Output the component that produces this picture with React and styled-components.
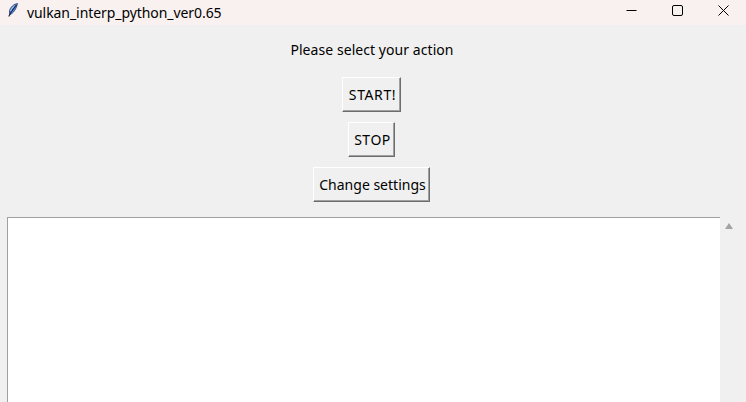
import styled, { createGlobalStyle } from "styled-components";

const GlobalStyle = createGlobalStyle`
  html, body {
    margin: 0;
    padding: 0;
    height: 100%;
    overflow: hidden;
    background: #f0f0f0;
  }
`;

const Window = styled.div`
  width: 746px;
  height: 402px;
  display: flex;
  flex-direction: column;
  overflow: hidden;
  background: #f0f0f0;
  font-family: "Noto Sans", "Open Sans", sans-serif;
  color: #000;
`;

const TitleBar = styled.div`
  height: 25px;
  flex: none;
  display: flex;
  align-items: flex-start;
  background: #f8f1f0;
`;

const AppIcon = styled.svg`
  width: 12px;
  height: 18px;
  margin: 3px 0 0 7px;
  flex: none;
`;

const Title = styled.div`
  margin-left: 8px;
  font-size: 14px;
  line-height: 25px;
  letter-spacing: -0.07px;
  flex: 1;
`;

const WindowButton = styled.div`
  width: 46px;
  height: 21px;
  display: flex;
  align-items: center;
  justify-content: center;

  svg {
    display: block;
  }
`;

const Content = styled.div`
  flex: 1;
  min-height: 0;
  padding-right: 3px;
  display: flex;
  flex-direction: column;
  align-items: center;
`;

const Prompt = styled.div`
  margin-top: 15px;
  padding-left: 1px;
  height: 20px;
  font-size: 14px;
  line-height: 20px;
  letter-spacing: 0.06px;
`;

const Actions = styled.div`
  margin-top: 17px;
  display: flex;
  flex-direction: column;
  align-items: center;
  gap: 10px;
`;

const ActionButton = styled.button`
  width: ${(p) => p.$width}px;
  height: 35px;
  padding: 0 0 0 2px;
  box-sizing: border-box;
  font-family: inherit;
  font-size: 14px;
  letter-spacing: ${(p) => p.$tracking || 0}px;
  color: #000;
  background: #f0f0f0;
  border: 1px solid;
  border-color: #fff #6d6d6d #6d6d6d #fff;
  box-shadow: inset -1px -1px 0 #a0a0a0;
  border-radius: 0;
`;

const LogRow = styled.div`
  align-self: stretch;
  margin-top: 15px;
  padding-left: 7px;
  flex: 1;
  min-height: 0;
  display: flex;
`;

const LogBox = styled.div`
  width: 713px;
  box-sizing: border-box;
  background: #fff;
  border-top: 1px solid #a0a0a0;
  border-left: 1px solid #a0a0a0;
`;

const ScrollBar = styled.div`
  width: 18px;
  display: flex;
  justify-content: center;
  padding-top: 6px;

  svg {
    display: block;
  }
`;

const App = () => {
  return (
    <Window>
      <GlobalStyle />
      <TitleBar>
        <AppIcon viewBox="0 0 12 18">
          <path
            d="M10.500.500C7 1 3.200 4 2.500 8c-.2 1.500 0 2.500.5 3.500C6 10.500 9.500 6 10.500.500z"
            fill="#5c8fd8"
            stroke="#1b2f5e"
            strokeWidth=".7"
          />
          <path d="M9.500 2C7.500 4.500 4 8.500 1.800 13.500" stroke="#10244f" strokeWidth="1.100" fill="none" />
          <path d="M7.500 2.800C5.800 4.200 4.300 6 3.700 8" stroke="#c4d6f2" strokeWidth=".9" fill="none" />
        </AppIcon>
        <Title>vulkan_interp_python_ver0.65</Title>
        <WindowButton>
          <svg width="11" height="11" viewBox="0 0 11 11">
            <path d="M.5 5.500h10" stroke="#000" strokeWidth="1" />
          </svg>
        </WindowButton>
        <WindowButton>
          <svg width="11" height="11" viewBox="0 0 11 11">
            <rect x=".5" y=".5" width="10" height="10" rx="1.500" stroke="#000" strokeWidth="1" fill="none" />
          </svg>
        </WindowButton>
        <WindowButton>
          <svg width="11" height="11" viewBox="0 0 11 11">
            <path d="M.5.500l10 10M10.500.500l-10 10" stroke="#000" strokeWidth="1" />
          </svg>
        </WindowButton>
      </TitleBar>
      <Content>
        <Prompt>Please select your action</Prompt>
        <Actions>
          <ActionButton $width={59} $tracking={0.6}>START!</ActionButton>
          <ActionButton $width={47} $tracking={0.5}>STOP</ActionButton>
          <ActionButton $width={117}>Change settings</ActionButton>
        </Actions>
        <LogRow>
          <LogBox />
          <ScrollBar>
            <svg width="8" height="6" viewBox="0 0 8 6">
              <path d="M4 0l4 6H0z" fill="#a3a3a3" />
            </svg>
          </ScrollBar>
        </LogRow>
      </Content>
    </Window>
  );
};

export default App;
